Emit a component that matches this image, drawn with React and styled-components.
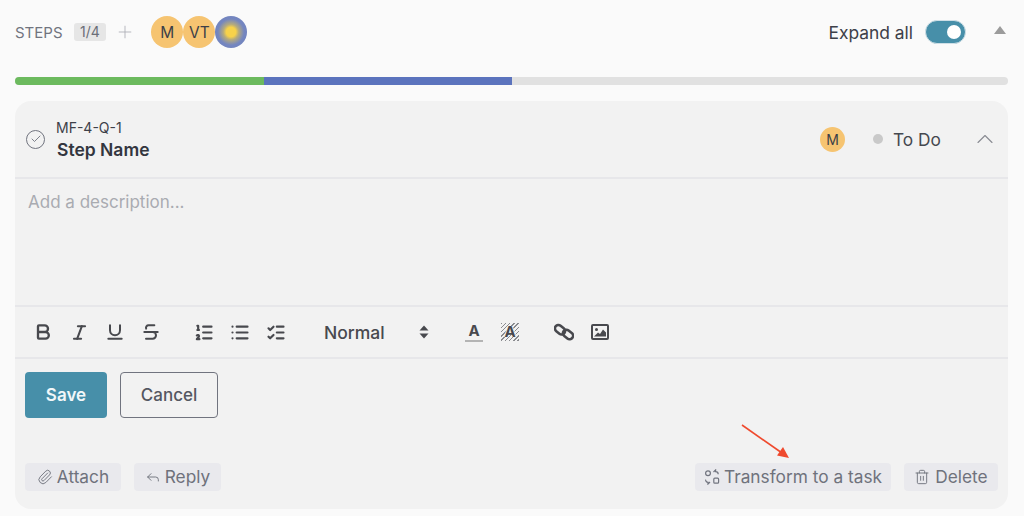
import styled, { createGlobalStyle } from "styled-components";
import {
  Bold,
  Italic,
  Underline,
  Strikethrough,
  ListOrdered,
  List,
  ListChecks,
  Paperclip,
  Reply,
  Trash2,
  Check,
  ChevronUp,
  Plus,
} from "lucide-react";

const GlobalStyle = createGlobalStyle`
  html, body {
    margin: 0;
    background: #fafafa;
    font-family: "Inter", "Liberation Sans", sans-serif;
    overflow: hidden;
  }
`;

const Page = styled.div`
  width: 1024px;
  height: 516px;
  padding: 16px 16px 0 15px;
  box-sizing: border-box;
`;

const Header = styled.div`
  display: flex;
  align-items: center;
  height: 32px;
`;

const StepsLabel = styled.span`
  font-size: 15px;
  color: #71747f;
`;

const Count = styled.span`
  margin-left: 11px;
  padding: 0 6.5px;
  height: 18px;
  line-height: 18px;
  border-radius: 3px;
  background: #e6e6e6;
  font-size: 14px;
  color: #6b6e78;
`;

const AddStep = styled.span`
  display: flex;
  margin-left: 9px;
  color: #a9abb3;
`;

const Avatars = styled.div`
  display: flex;
  margin-left: 16px;
`;

const Avatar = styled.span`
  display: flex;
  align-items: center;
  justify-content: center;
  width: ${(p) => p.$size || 32}px;
  height: ${(p) => p.$size || 32}px;
  border-radius: 50%;
  background: #f6c471;
  color: #3c3f48;
  font-size: ${(p) => (p.$size ? 14 : 15.5)}px;
`;

const SunAvatar = styled(Avatar)`
  background: radial-gradient(circle, #f7d24a 0 21%, #b6ab7c 34%, #7486c0 58%, #6f80bb 100%);
`;

const ExpandGroup = styled.div`
  display: flex;
  align-items: center;
  margin-left: auto;
`;

const ExpandLabel = styled.span`
  font-size: 17.4px;
  color: #3d4049;
`;

const Toggle = styled.span`
  position: relative;
  display: block;
  margin-left: 12px;
  width: 41px;
  height: 24px;
  border-radius: 12px;
  background: #478fa9;
  box-sizing: border-box;
  border: 1px solid #cfdfe6;

  &::after {
    content: "";
    position: absolute;
    top: 4px;
    right: 4px;
    width: 14px;
    height: 14px;
    border-radius: 50%;
    background: #fff;
  }
`;

const Caret = styled.span`
  margin: -5px 2px 0 28px;
  width: 0;
  height: 0;
  border-left: 6px solid transparent;
  border-right: 6px solid transparent;
  border-bottom: 8px solid #9b9b9b;
`;

const Progress = styled.div`
  display: flex;
  height: 8px;
  margin-top: 29px;
  border-radius: 4px;
  overflow: hidden;
  background: #e1e1e1;
`;

const Segment = styled.span`
  width: 248.5px;
  background: ${(p) => p.$color};
`;

const Card = styled.div`
  position: relative;
  margin-top: 16px;
  height: 408px;
  border-radius: 16px;
  background: #f2f2f2;
  display: flex;
  flex-direction: column;
`;

const CardHead = styled.div`
  display: flex;
  align-items: center;
  height: 76px;
  padding: 0 14px 0 11px;
  border-bottom: 2px solid #e7e7ea;
  flex-shrink: 0;
`;

const CheckCircle = styled.span`
  display: flex;
  align-items: center;
  justify-content: center;
  width: 19px;
  height: 19px;
  box-sizing: border-box;
  border: 1.5px solid #71747f;
  border-radius: 50%;
  color: #71747f;
`;

const StepTitles = styled.div`
  display: flex;
  flex-direction: column;
  margin-left: 11px;
  gap: 4px;
`;

const StepCode = styled.span`
  font-size: 14px;
  color: #3d4049;
  line-height: 17px;
`;

const StepName = styled.span`
  font-size: 17.5px;
  font-weight: 600;
  color: #33363f;
  line-height: 20px;
  margin-left: 1px;
`;

const StatusGroup = styled.div`
  display: flex;
  align-items: center;
  margin-left: auto;
`;

const StatusDot = styled.span`
  margin-left: 28px;
  width: 10px;
  height: 10px;
  border-radius: 50%;
  background: #c9c9c9;
`;

const StatusText = styled.span`
  margin-left: 10px;
  font-size: 17.3px;
  color: #45484f;
  width: 83px;
`;

const Chevron = styled.span`
  display: flex;
  margin: -5px;
  color: #8b8d94;
`;

const Description = styled.div`
  height: 128px;
  padding: 13px 13px;
  box-sizing: border-box;
  border-bottom: 2px solid #e7e7ea;
  font-size: 17px;
  color: #a9abb1;
  line-height: 20px;
  flex-shrink: 0;
`;

const Toolbar = styled.div`
  display: flex;
  align-items: center;
  height: 50px;
  padding-left: 18px;
  border-bottom: 2px solid #e7e7ea;
  color: #48494e;
  flex-shrink: 0;
`;

const ToolGroup = styled.div`
  display: flex;
  align-items: center;
  gap: 16px;
  margin-right: ${(p) => p.$gap || 0}px;
`;

const ToolIcon = styled.span`
  display: flex;
  align-items: center;
  justify-content: center;
  width: 20px;
  height: 20px;
`;

const HeadingSelect = styled.div`
  display: flex;
  align-items: center;
  justify-content: space-between;
  width: 105px;
  margin-right: 35px;
  font-size: 17.5px;
  font-weight: 500;
  color: #48494e;
`;

const ColorLetter = styled.span`
  display: block;
  width: 18px;
  text-align: center;
  font-size: 15px;
  font-weight: 700;
  line-height: 15px;
  padding-bottom: 2px;
  border-bottom: 2px solid #b4b4b4;
`;

const BackLetter = styled.span`
  display: block;
  width: 18px;
  height: 18px;
  text-align: center;
  font-size: 15px;
  font-weight: 700;
  line-height: 18px;
  background: repeating-linear-gradient(135deg, #8a8b8f 0 1px, #f2f2f2 1px 3px);
  text-shadow: 1px 0 #f2f2f2, -1px 0 #f2f2f2;
`;

const Actions = styled.div`
  display: flex;
  gap: 13px;
  padding: 13px 10px 0;
`;

const SaveButton = styled.button`
  width: 82px;
  height: 46px;
  border: none;
  border-radius: 4px;
  background: #478fa9;
  color: #f2f7f9;
  font: 600 17px "Inter", sans-serif;
`;

const CancelButton = styled.button`
  width: 98px;
  height: 46px;
  box-sizing: border-box;
  border: 1.5px solid #71747f;
  border-radius: 4px;
  background: transparent;
  color: #545761;
  font: 500 17px "Inter", sans-serif;
`;

const Footer = styled.div`
  display: flex;
  gap: 13px;
  margin-top: auto;
  padding: 0 10px 18px;
`;

const FootButton = styled.span`
  display: flex;
  align-items: center;
  justify-content: center;
  gap: ${(p) => p.$gap || 4}px;
  width: ${(p) => p.$width}px;
  height: 28px;
  padding-bottom: 1px;
  box-sizing: border-box;
  border-radius: 4px;
  background: #e9e9ed;
  color: #6f727c;
  font-size: 17.3px;
  margin-left: ${(p) => (p.$push ? "auto" : 0)};
`;

const Arrow = styled.svg`
  position: absolute;
  left: 725px;
  top: 322px;
`;

const SelectArrows = () => (
  <svg width="10" height="14" viewBox="0 0 10 14" fill="#48494e">
    <polygon points="5,0.5 9.5,5.5 0.5,5.5" />
    <polygon points="5,13.5 9.5,8.5 0.5,8.5" />
  </svg>
);

const LinkIcon = () => (
  <svg width="20" height="20" viewBox="0 0 20 20" fill="none" stroke="#48494e" strokeWidth="2.6">
    <rect x="0.5" y="4.2" width="11" height="7" rx="3.5" transform="rotate(38 6 7.7)" />
    <rect x="8.5" y="9" width="11" height="7" rx="3.5" transform="rotate(38 14 12.5)" />
  </svg>
);

const PictureIcon = () => (
  <svg width="18" height="16" viewBox="0 0 18 16">
    <rect x="1" y="1" width="16" height="14" rx="1" fill="none" stroke="#48494e" strokeWidth="2" />
    <circle cx="5.5" cy="5.5" r="1.5" fill="#48494e" />
    <polygon points="3,12.5 7,8.5 9,10 12,5.5 15,8.5 15,12.5" fill="#48494e" />
  </svg>
);

const TransformIcon = () => (
  <svg width="16" height="16" viewBox="0 0 16 16" fill="none" stroke="#71747f" strokeWidth="1.2">
    <circle cx="4" cy="4.2" r="2.4" />
    <rect x="9.8" y="9.2" width="4.8" height="5" rx="1" />
    <path d="M9.5 3 11.6 1v1.6a2.6 2.6 0 0 1 2.6 2.6M6 13l-2 2v-1.6A2.6 2.6 0 0 1 1.6 10.6" />
  </svg>
);

const App = () => {
  return (
    <Page>
      <GlobalStyle />
      <Header>
        <StepsLabel>STEPS</StepsLabel>
        <Count>1/4</Count>
        <AddStep>
          <Plus size={20} strokeWidth={1} />
        </AddStep>
        <Avatars>
          <Avatar>M</Avatar>
          <Avatar>VT</Avatar>
          <SunAvatar />
        </Avatars>
        <ExpandGroup>
          <ExpandLabel>Expand all</ExpandLabel>
          <Toggle />
          <Caret />
        </ExpandGroup>
      </Header>

      <Progress>
        <Segment $color="#6cba5e" />
        <Segment $color="#5b73bd" />
      </Progress>

      <Card>
        <CardHead>
          <CheckCircle>
            <Check size={12} strokeWidth={1.8} />
          </CheckCircle>
          <StepTitles>
            <StepCode>MF-4-Q-1</StepCode>
            <StepName>Step Name</StepName>
          </StepTitles>
          <StatusGroup>
            <Avatar $size={25}>M</Avatar>
            <StatusDot />
            <StatusText>To Do</StatusText>
            <Chevron>
              <ChevronUp size={28} strokeWidth={1} />
            </Chevron>
          </StatusGroup>
        </CardHead>

        <Description>Add a description...</Description>

        <Toolbar>
          <ToolGroup $gap={33}>
            <ToolIcon><Bold size={20} strokeWidth={2.8} /></ToolIcon>
            <ToolIcon><Italic size={19} strokeWidth={2.6} /></ToolIcon>
            <ToolIcon><Underline size={20} strokeWidth={2.4} /></ToolIcon>
            <ToolIcon><Strikethrough size={20} strokeWidth={2.4} /></ToolIcon>
          </ToolGroup>
          <ToolGroup $gap={38}>
            <ToolIcon><ListOrdered size={21} strokeWidth={2.6} /></ToolIcon>
            <ToolIcon><List size={21} strokeWidth={2.6} /></ToolIcon>
            <ToolIcon><ListChecks size={21} strokeWidth={2.6} /></ToolIcon>
          </ToolGroup>
          <HeadingSelect>
            Normal
            <SelectArrows />
          </HeadingSelect>
          <ToolGroup $gap={34}>
            <ToolIcon><ColorLetter>A</ColorLetter></ToolIcon>
            <ToolIcon><BackLetter>A</BackLetter></ToolIcon>
          </ToolGroup>
          <ToolGroup>
            <ToolIcon><LinkIcon /></ToolIcon>
            <ToolIcon><PictureIcon /></ToolIcon>
          </ToolGroup>
        </Toolbar>

        <Actions>
          <SaveButton>Save</SaveButton>
          <CancelButton>Cancel</CancelButton>
        </Actions>

        <Footer>
          <FootButton $width={96}>
            <Paperclip size={16} strokeWidth={1.4} />
            Attach
          </FootButton>
          <FootButton $width={87}>
            <Reply size={16} strokeWidth={1.4} />
            Reply
          </FootButton>
          <FootButton $push $width={196}>
            <TransformIcon />
            Transform to a task
          </FootButton>
          <FootButton $width={94} $gap={5}>
            <Trash2 size={16} strokeWidth={1.4} />
            Delete
          </FootButton>
        </Footer>

        <Arrow width="52" height="38" viewBox="0 0 52 38">
          <line x1="2" y1="2" x2="42" y2="30" stroke="#ef4a2e" strokeWidth="1.6" />
          <polygon points="49,35 37,32.5 43,24" fill="#ef4a2e" />
        </Arrow>
      </Card>
    </Page>
  );
};

export default App;
